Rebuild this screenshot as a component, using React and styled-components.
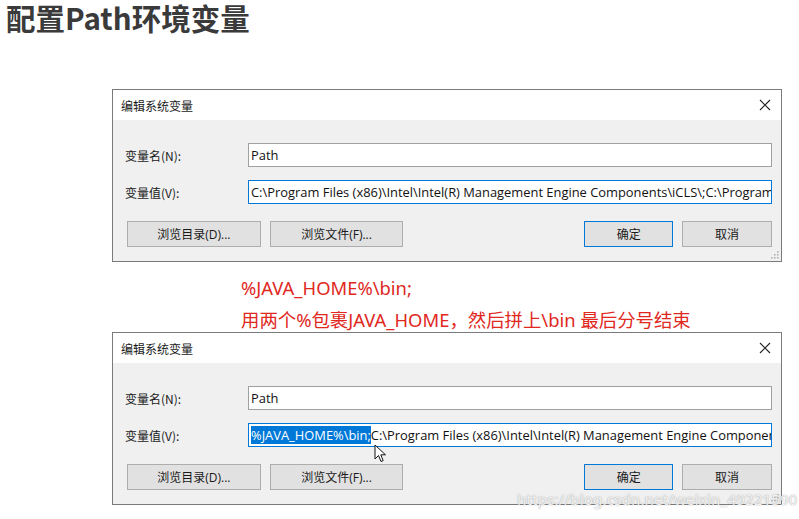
import React from 'react';
import styled, { createGlobalStyle } from 'styled-components';

const GlobalStyle = createGlobalStyle`
  html, body {
    margin: 0;
    padding: 0;
    background: #ffffff;
  }
  body {
    font-family: "Noto Sans", "Noto Sans CJK SC", sans-serif;
  }
`;

const Page = styled.div`
  position: relative;
  width: 799px;
  height: 519px;
  overflow: hidden;
  background: #fff;
`;

const Title = styled.h1`
  margin: 0;
  padding: 0 0 0 6px;
  height: 89px;
  box-sizing: border-box;
  font-family: "Noto Sans CJK SC", "Noto Sans", sans-serif;
  font-weight: 700;
  font-size: 29.5px;
  line-height: 34px;
  color: #3a3a3a;
  white-space: nowrap;
`;

const Dialog = styled.div`
  margin-left: 112px;
  width: 670px;
  height: 173px;
  box-sizing: border-box;
  border: 1px solid #7a7a7a;
  background: #f0f0f0;
  display: flex;
  flex-direction: column;
  position: relative;
`;

const TitleBar = styled.div`
  height: 30px;
  background: #ffffff;
  display: flex;
  align-items: center;
  justify-content: space-between;
  padding: 0 8px 0 8px;
  flex-shrink: 0;
`;

const TitleText = styled.span`
  font-family: "Noto Sans CJK SC", sans-serif;
  font-size: 12px;
  color: #1a1a1a;
`;

const Close = styled.span`
  display: flex;
  width: 16px;
  height: 16px;
  align-items: center;
  justify-content: center;
`;

const Body = styled.div`
  display: flex;
  flex-direction: column;
  padding: 23px 9px 0 12px;
  gap: 13px;
`;

const Row = styled.div`
  display: flex;
  align-items: center;
  height: 24px;
`;

const Label = styled.span`
  width: 123px;
  font-family: "Noto Sans CJK SC", sans-serif;
  font-size: 12px;
  color: #1a1a1a;
`;

const Field = styled.div`
  flex: 1;
  height: 24px;
  box-sizing: border-box;
  border: 1px solid ${p => (p.$focused ? '#0078d7' : '#a0a0a0')};
  background: #fff;
  display: flex;
  align-items: center;
  padding-left: 2px;
  overflow: hidden;
  white-space: nowrap;
  font-family: "Open Sans", "Noto Sans", sans-serif;
  font-size: 12.9px;
  color: #111;
`;

const Selected = styled.span`
  background: #0078d7;
  color: #fff;
  line-height: 18px;
`;

const Buttons = styled.div`
  display: flex;
  align-items: center;
  margin-top: 4px;
  padding-left: 2px;
`;

const Button = styled.div`
  width: ${p => p.$w}px;
  height: 26px;
  box-sizing: border-box;
  border: 1px solid ${p => (p.$primary ? '#0078d7' : '#adadad')};
  background: #e1e1e1;
  display: flex;
  align-items: center;
  justify-content: center;
  margin-left: ${p => p.$gap || 0}px;
  font-family: "Open Sans", "Noto Sans CJK SC", sans-serif;
  font-size: 12px;
  color: #1a1a1a;
`;

const Grip = styled.svg`
  position: absolute;
  right: 2px;
  bottom: 2px;
`;

const Note = styled.div`
  height: 70px;
  box-sizing: border-box;
  padding: 13px 0 0 241px;
  font-family: "Noto Sans", "Noto Sans CJK SC", sans-serif;
  font-size: 18.4px;
  color: #e0281e;
  white-space: nowrap;
`;

const NoteLine = styled.div`
  height: 32px;
  line-height: 26px;
`;

const Cursor = styled.svg`
  position: absolute;
  left: 374px;
  top: 444px;
`;

const Watermark = styled.div`
  position: absolute;
  left: 517px;
  top: 489px;
  font-family: "Noto Sans", sans-serif;
  font-size: 15px;
  color: rgba(255, 255, 255, 0.85);
  text-shadow: 0 0 1px rgba(120, 120, 120, 0.6), 0 0 2px rgba(150, 150, 150, 0.4);
  letter-spacing: 0.2px;
`;

const CloseIcon = () => (
  <Close>
    <svg width="12" height="12" viewBox="0 0 12 12">
      <path d="M1 1 L11 11 M11 1 L1 11" stroke="#222" strokeWidth="1.1" />
    </svg>
  </Close>
);

const GripIcon = () => (
  <Grip width="10" height="10" viewBox="0 0 10 10">
    {[[8, 2], [5, 5], [8, 5], [2, 8], [5, 8], [8, 8]].map(([x, y]) => (
      <rect key={`${x}-${y}`} x={x} y={y} width="1.6" height="1.6" fill="#b5b5b5" />
    ))}
  </Grip>
);

const pathValue = 'C:\\Program Files (x86)\\Intel\\Intel(R) Management Engine Components\\iCLS\\;C:\\Program Files (x86)\\Intel\\Intel(R) Management Engine Components\\iCLS\\';

const EnvDialog = ({ selected }) => (
  <Dialog>
    <TitleBar>
      <TitleText>编辑系统变量</TitleText>
      <CloseIcon />
    </TitleBar>
    <Body>
      <Row>
        <Label>变量名(N):</Label>
        <Field>Path</Field>
      </Row>
      <Row>
        <Label>变量值(V):</Label>
        <Field $focused>
          {selected && <Selected>%JAVA_HOME%\bin;</Selected>}
          {pathValue}
        </Field>
      </Row>
      <Buttons>
        <Button $w={134}>浏览目录(D)...</Button>
        <Button $w={134} $gap={9}>浏览文件(F)...</Button>
        <Button $w={89} $gap={181} $primary>确定</Button>
        <Button $w={90} $gap={9}>取消</Button>
      </Buttons>
    </Body>
    <GripIcon />
  </Dialog>
);

export default function App() {
  return (
    <Page>
      <GlobalStyle />
      <Title>配置Path环境变量</Title>
      <EnvDialog />
      <Note>
        <NoteLine>%JAVA_HOME%\bin;</NoteLine>
        <NoteLine>用两个%包裹JAVA_HOME，然后拼上\bin 最后分号结束</NoteLine>
      </Note>
      <EnvDialog selected />
      <Cursor width="14" height="20" viewBox="0 0 14 20">
        <path d="M1 1 L1 15 L4.5 11.5 L7 17.5 L9.2 16.6 L6.8 10.8 L11.5 10.8 Z" fill="#fff" stroke="#111" strokeWidth="1" strokeLinejoin="round" />
      </Cursor>
      <Watermark>https://blog.csdn.net/weixin_49221590</Watermark>
    </Page>
  );
}
